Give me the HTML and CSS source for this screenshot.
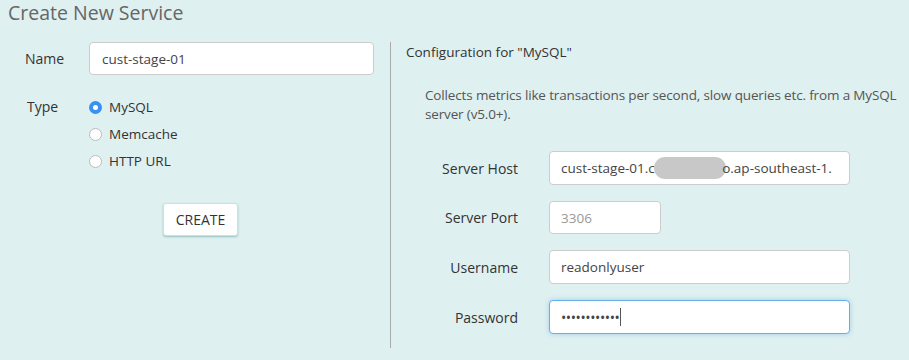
FILE: index.html
```html
<!DOCTYPE html>
<html lang="en">
<head>
    <meta charset="UTF-8">
    <title>Create New Service</title>
    <link rel="stylesheet" href="styles.css">
</head>
<body>
    <h1 class="title">Create New Service</h1>
    <div class="panel">
        <div class="left">
            <div class="row">
                <label class="label">Name</label>
                <div class="field name-field">cust-stage-01</div>
            </div>
            <div class="row type-row">
                <label class="label">Type</label>
                <div class="radios">
                    <div class="radio"><span class="dot checked"></span>MySQL</div>
                    <div class="radio"><span class="dot"></span>Memcache</div>
                    <div class="radio"><span class="dot"></span>HTTP URL</div>
                </div>
            </div>
            <div class="actions">
                <button class="btn">CREATE</button>
            </div>
        </div>
        <div class="right">
            <h2 class="config-title">Configuration for "MySQL"</h2>
            <p class="desc">Collects metrics like transactions per second, slow queries etc. from a MySQL server (v5.0+).</p>
            <div class="form">
                <label class="flabel">Server Host</label>
                <div class="field wide">cust-stage-01.cl<span class="blur"></span>o.ap-southeast-1.</div>
                <label class="flabel">Server Port</label>
                <div class="field short placeholder">3306</div>
                <label class="flabel">Username</label>
                <div class="field wide">readonlyuser</div>
                <label class="flabel">Password</label>
                <div class="field wide focus">••••••••••••<span class="caret"></span></div>
            </div>
        </div>
    </div>
</body>
</html>
```

FILE: styles.css
```css
body {
    margin: 0;
    background-color: #dff0f0;
    font-family: "Open Sans", sans-serif;
    font-size: 13.5px;
    color: #333;
}
.title {
    margin: 0;
    padding: 1px 0 0 8px;
    font-size: 19.5px;
    font-weight: normal;
    color: #666;
    line-height: 24px;
}
.panel {
    display: flex;
    margin-top: 17px;
}
.left {
    width: 390px;
    border-right: 1px solid #aaa;
    height: 306px;
}
.row {
    display: flex;
    align-items: center;
}
.label {
    width: 64px;
    padding-left: 25px;
    font-size: 14px;
}
.field {
    box-sizing: border-box;
    background: #fff;
    border: 1px solid #ccc;
    border-radius: 4px;
    height: 33px;
    padding: 0 11px;
    display: flex;
    align-items: center;
    white-space: nowrap;
    overflow: hidden;
    color: #444;
}
.name-field {
    width: 285px;
    padding-left: 12px;
}
.type-row {
    align-items: flex-start;
    margin-top: 20px;
}
.type-row .label {
    padding-left: 27px;
    width: 62px;
    line-height: 24px;
}
.radios {
    display: flex;
    flex-direction: column;
    gap: 3px;
}
.radio {
    display: flex;
    align-items: center;
    line-height: 24px;
}
.dot {
    box-sizing: border-box;
    width: 13px;
    height: 13px;
    border-radius: 50%;
    border: 1px solid #bbb;
    background: #fff;
    margin-right: 7px;
}
.dot.checked {
    border: 4px solid #3b8ff0;
}
.actions {
    padding: 30px 0 0 163px;
}
.btn {
    font-family: "Open Sans", sans-serif;
    font-size: 14px;
    color: #333;
    background: #fff;
    border: 1px solid #c7e4e2;
    border-radius: 3px;
    box-shadow: 0 1px 2px rgba(80, 150, 150, 0.5);
    width: 75px;
    height: 33px;
    padding: 0;
}
.right {
    padding-left: 15px;
    flex: 1;
}
.config-title {
    margin: 0;
    font-size: 13.5px;
    font-weight: normal;
    line-height: 20px;
    color: #333;
}
.desc {
    margin: 24px 0 0 19px;
    color: #555;
    line-height: 19px;
    letter-spacing: -0.15px;
}
.form {
    display: grid;
    grid-template-columns: 112px 301px;
    column-gap: 31px;
    row-gap: 16px;
    align-items: center;
    margin-top: 27px;
}
.flabel {
    text-align: right;
    font-size: 14px;
    color: #333;
}
.wide {
    width: 301px;
    height: 34px;
}
.short {
    width: 112px;
}
.placeholder {
    color: #999;
}
.blur {
    display: inline-block;
    width: 72px;
    height: 22px;
    background: #c8c8c8;
    border-radius: 11px;
    margin: 0 -4px;
}
.focus {
    border-color: #66afe9;
    box-shadow: 0 0 5px rgba(102, 175, 233, 0.5);
    font-size: 14px;
    letter-spacing: -0.4px;
}
.caret {
    display: inline-block;
    width: 1px;
    height: 18px;
    background: #555;
    margin-left: 1px;
}
```
